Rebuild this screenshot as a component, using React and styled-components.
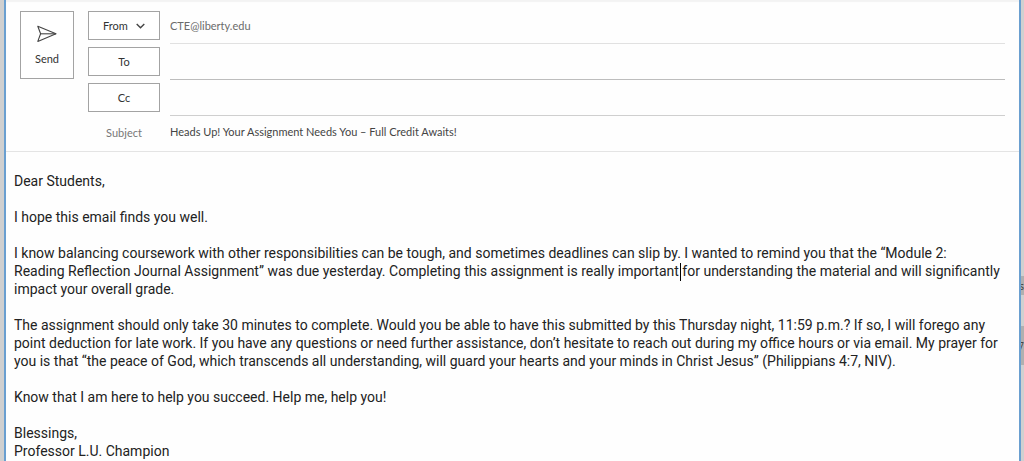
import React, { useState } from 'react';
import styled, { createGlobalStyle } from 'styled-components';

const App = () => {
  const [fields, setFields] = useState({
    from: 'CTE@liberty.edu',
    to: '',
    cc: '',
    subject: 'Heads Up! Your Assignment Needs You – Full Credit Awaits!',
  });
  const changeHandler = (e) => {
    setFields({ ...fields, [e.target.name]: e.target.value });
  };
  return (
    <>
      <GlobalStyle />
      <Desktop>
        <Window>
          <Header>
            <SendButton type='button'>
              <SendIcon />
              Send
            </SendButton>
            <Fields>
              <Row>
                <FieldButton type='button'>
                  From
                  <Chevron />
                </FieldButton>
                <Field $line='#e1e1e1' $color='#6b6b6b' name='from' aria-label='From' value={fields.from} onChange={changeHandler} />
              </Row>
              <Row>
                <FieldButton type='button'>To</FieldButton>
                <Field $line='#bdbdbd' name='to' aria-label='To' value={fields.to} onChange={changeHandler} />
              </Row>
              <Row>
                <FieldButton type='button'>Cc</FieldButton>
                <Field $line='#cfcfcf' name='cc' aria-label='Cc' value={fields.cc} onChange={changeHandler} />
              </Row>
              <Row>
                <SubjectLabel htmlFor='subject'>Subject</SubjectLabel>
                <Field id='subject' name='subject' value={fields.subject} onChange={changeHandler} />
              </Row>
            </Fields>
          </Header>
          <Message role='textbox' aria-label='Message' aria-multiline='true' contentEditable suppressContentEditableWarning spellCheck={false}>
            <p>Dear Students,</p>
            <p>I hope this email finds you well.</p>
            <p>
              I know balancing coursework with other responsibilities can be tough, and sometimes deadlines can slip by. I wanted to remind you that the “Module 2:
              <br />
              Reading Reflection Journal Assignment” was due yesterday. Completing this assignment is really important
              <Caret /> for understanding the material and will significantly
              <br />
              impact your overall grade.
            </p>
            <p>
              The assignment should only take 30 minutes to complete. Would you be able to have this submitted by this Thursday night, 11:59 p.m.? If so, I will forego any
              <br />
              point deduction for late work. If you have any questions or need further assistance, don’t hesitate to reach out during my office hours or via email. My prayer for
              <br />
              you is that “the peace of God, which transcends all understanding, will guard your hearts and your minds in Christ Jesus” (Philippians 4:7, NIV).
            </p>
            <p>Know that I am here to help you succeed. Help me, help you!</p>
            <p>
              Blessings,
              <br />
              Professor L.U. Champion
            </p>
          </Message>
        </Window>
        <Behind>
          <Block>s</Block>
          <Block>7</Block>
        </Behind>
      </Desktop>
    </>
  );
};

const SendIcon = () => (
  <svg width='20' height='18' viewBox='0 0 20 18' fill='none' stroke='#444' strokeWidth='1.1' strokeLinejoin='round' aria-hidden='true'>
    <path d='M0.8 1.2 L19 8.8 L0.8 16.4 L3.6 8.8 Z' />
    <path d='M3.6 8.8 H19' />
  </svg>
);

const Chevron = () => (
  <svg width='9' height='6' viewBox='0 0 9 6' fill='none' stroke='#444' strokeWidth='1.4' aria-hidden='true'>
    <path d='M0.7 1 L4.5 4.8 L8.3 1' />
  </svg>
);

const GlobalStyle = createGlobalStyle`
  * {
    box-sizing: border-box;
    margin: 0;
    padding: 0;
  }
  body {
    background: #d6d6d6;
  }
`;

const Desktop = styled.div`
  display: grid;
  grid-template-columns: minmax(0, 1fr) 3px;
  padding-left: 4px;
  min-height: 100vh;
  background: #d0d0d0;
`;

const Window = styled.main`
  background: #fefefe;
  border: solid #6a9fd0;
  border-width: 0 2px;
`;

const Header = styled.header`
  display: flex;
  align-items: flex-start;
  gap: 14px;
  padding: 8px 14px 2px;
  border-bottom: 1px solid #e4e4e4;
  box-shadow: inset 0 2px 1px #f3f3f3;
  font-family: Lato, sans-serif;
  font-size: 11px;
  line-height: 14px;
`;

const SendButton = styled.button`
  display: flex;
  flex-direction: column;
  align-items: center;
  justify-content: center;
  gap: 9px;
  width: 54px;
  height: 68px;
  margin-top: 3px;
  background: #fff;
  border: 1px solid #a3a3a3;
  color: #333;
  font: inherit;
`;

const Fields = styled.div`
  flex: 1;
  min-width: 0;
`;

const Row = styled.div`
  display: grid;
  grid-template-columns: 72px minmax(0, 1fr);
  align-items: center;
  column-gap: 10px;
  height: 36px;
  &:last-child {
    height: 33px;
  }
`;

const FieldButton = styled.button`
  display: flex;
  align-self: start;
  align-items: center;
  justify-content: center;
  gap: 8px;
  height: 29px;
  margin-top: 3px;
  background: #fff;
  border: 1px solid #a3a3a3;
  color: #333;
  font: inherit;
`;

const SubjectLabel = styled.label`
  text-align: center;
  color: #777;
`;

const Field = styled.input`
  align-self: stretch;
  width: 100%;
  background: transparent;
  border: 0;
  border-bottom: 1px solid ${({ $line }) => $line || 'transparent'};
  color: ${({ $color }) => $color || '#444'};
  font: inherit;
  outline: none;
`;

const Message = styled.div`
  display: flex;
  flex-direction: column;
  gap: 18px;
  padding: 20px 8px 0;
  color: #222;
  font-family: Roboto, sans-serif;
  font-size: 14px;
  line-height: 18px;
  outline: none;
`;

const Caret = styled.span`
  position: relative;
  &::after {
    content: '';
    position: absolute;
    top: 0;
    left: 1px;
    width: 1px;
    height: 18px;
    background: #000;
  }
`;

const Behind = styled.div`
  display: grid;
  grid-template-rows: 19px 39px;
  row-gap: 31px;
  padding-top: 276px;
`;

const Block = styled.div`
  display: flex;
  align-items: center;
  justify-content: flex-end;
  overflow: hidden;
  background: #b0b0b0;
  color: #444;
  font-family: 'Noto Sans', sans-serif;
  font-size: 10px;
`;

export default App;
